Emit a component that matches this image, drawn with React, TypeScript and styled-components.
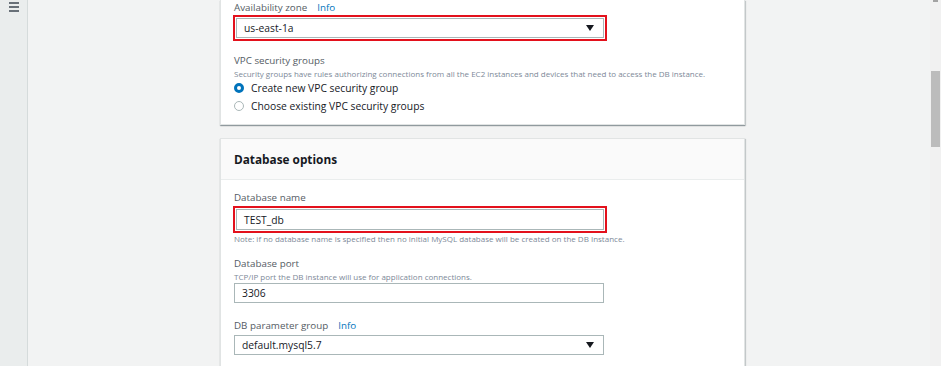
import React from "react";
import styled, { createGlobalStyle } from "styled-components";

const Global = createGlobalStyle`
  html, body { margin: 0; padding: 0; }
  body { font-family: "Open Sans", "Liberation Sans", sans-serif; color: #16191f; }
`;

const Shell = styled.div`
  display: flex;
  width: 941px;
  height: 366px;
  overflow: hidden;
  background: #f2f3f3;
`;

const Sidebar = styled.div`
  width: 28px;
  flex: none;
  background: #eaeded;
  border-right: 1px solid #d5dbdb;
  display: flex;
  justify-content: flex-start;
  padding: 2px 0 0 9px;
  box-sizing: border-box;
`;

const Burger = styled.div`
  display: flex;
  flex-direction: column;
  gap: 2px;
  width: 10px;
  & > span { display: block; height: 2px; background: #687078; }
`;

const Main = styled.div`
  flex: 1;
  padding-left: 192px;
  box-sizing: border-box;
  display: flex;
  flex-direction: column;
  gap: 13px;
`;

const Card = styled.section<{ $top?: boolean }>`
  width: 525px;
  background: #fff;
  box-sizing: border-box;
  border: 1px solid #e1e4e4;
  border-top: ${(p) => (p.$top ? "none" : "1px solid #e1e4e4")};
  box-shadow: 0 1px 1px 0 rgba(0, 28, 36, 0.3), 1px 1px 1px 0 rgba(0, 28, 36, 0.15);
`;

const CardHeader = styled.div`
  height: 41px;
  background: #fafafa;
  border-bottom: 1px solid #eaeded;
  display: flex;
  align-items: center;
  padding-left: 13px;
  box-sizing: border-box;
`;

const Title = styled.h2`
  margin: 0;
  font-size: 11.8px;
  font-weight: 700;
  color: #16191f;
`;

const Body = styled.div<{ $pt: number; $pb: number }>`
  padding: ${(p) => p.$pt}px 0 ${(p) => p.$pb}px 13px;
  display: flex;
  flex-direction: column;
`;

const Field = styled.div<{ $mt?: number }>`
  margin-top: ${(p) => p.$mt ?? 0}px;
  display: flex;
  flex-direction: column;
`;

const Label = styled.div`
  font-size: 9.8px;
  line-height: 14px;
  color: #545b64;
  display: flex;
  gap: 10px;
`;

const Info = styled.a`
  color: #0073bb;
  text-decoration: none;
`;

const Hint = styled.div<{ $mt?: number }>`
  font-size: 8px;
  line-height: 11px;
  color: #7d8998;
  margin-top: ${(p) => p.$mt ?? 0}px;
`;

const Highlight = styled.div<{ $mt?: number }>`
  width: 374px;
  margin-left: -1px;
  margin-top: ${(p) => p.$mt ?? 0}px;
  border: 2px solid #e3111c;
  padding: 1px;
  box-sizing: border-box;
`;

const Box = styled.div<{ $w?: number; $h: number; $mt?: number }>`
  width: ${(p) => (p.$w ? `${p.$w}px` : "100%")};
  height: ${(p) => p.$h}px;
  margin-top: ${(p) => p.$mt ?? 0}px;
  border: 1px solid #aab7b8;
  box-sizing: border-box;
  display: flex;
  align-items: center;
  justify-content: space-between;
  padding: 0 9px 0 7px;
  font-size: 10.3px;
  color: #16191f;
  background: #fff;
`;

const Caret = styled.span`
  width: 0;
  height: 0;
  border-left: 4px solid transparent;
  border-right: 4px solid transparent;
  border-top: 6px solid #16191f;
`;

const RadioRow = styled.label<{ $mt?: number }>`
  display: flex;
  align-items: center;
  gap: 7px;
  margin-top: ${(p) => p.$mt ?? 0}px;
  font-size: 10.3px;
  line-height: 14px;
  color: #16191f;
`;

const Radio = styled.span<{ $on?: boolean }>`
  width: 10px;
  height: 10px;
  border-radius: 50%;
  box-sizing: border-box;
  background: #fff;
  border: ${(p) => (p.$on ? "3px solid #0073bb" : "1px solid #aab7b8")};
  flex: none;
`;

const Scroll = styled.div`
  width: 11px;
  flex: none;
  background: #f1f1f1;
  display: flex;
  flex-direction: column;
  align-items: center;
`;

const ScrollArrow = styled.div`
  width: 5px;
  height: 2px;
  background: #a3a3a3;
`;

const Thumb = styled.div`
  margin-top: 69px;
  width: 9px;
  height: 76px;
  background: #bcbcbc;
`;

export default function App() {
  return (
    <>
      <Global />
      <Shell>
        <Sidebar>
          <Burger>
            <span />
            <span />
            <span />
          </Burger>
        </Sidebar>
        <Main>
          <Card $top>
            <Body $pt={1} $pb={11}>
              <Field>
                <Label>
                  <span>Availability zone</span>
                  <Info>Info</Info>
                </Label>
                <Highlight $mt={0}>
                  <Box $h={20}>
                    <span>us-east-1a</span>
                    <Caret />
                  </Box>
                </Highlight>
              </Field>
              <Field $mt={13}>
                <Label>VPC security groups</Label>
                <Hint $mt={0}>
                  Security groups have rules authorizing connections from all the EC2 instances and devices that need to access the DB instance.
                </Hint>
                <RadioRow $mt={2}>
                  <Radio $on />
                  Create new VPC security group
                </RadioRow>
                <RadioRow $mt={4}>
                  <Radio />
                  Choose existing VPC security groups
                </RadioRow>
              </Field>
            </Body>
          </Card>
          <Card>
            <CardHeader>
              <Title>Database options</Title>
            </CardHeader>
            <Body $pt={11} $pb={20}>
              <Field>
                <Label>Database name</Label>
                <Highlight $mt={1}>
                  <Box $h={21}>
                    <span>TEST_db</span>
                  </Box>
                </Highlight>
                <Hint $mt={0}>
                  Note: if no database name is specified then no initial MySQL database will be created on the DB Instance.
                </Hint>
              </Field>
              <Field $mt={13}>
                <Label>Database port</Label>
                <Hint>TCP/IP port the DB instance will use for application connections.</Hint>
                <Box $w={370} $h={20} $mt={1}>
                  <span>3306</span>
                </Box>
              </Field>
              <Field $mt={16}>
                <Label>
                  <span>DB parameter group</span>
                  <Info>Info</Info>
                </Label>
                <Box $w={370} $h={20} $mt={2}>
                  <span>default.mysql5.7</span>
                  <Caret />
                </Box>
              </Field>
            </Body>
          </Card>
        </Main>
        <Scroll>
          <ScrollArrow />
          <Thumb />
        </Scroll>
      </Shell>
    </>
  );
}
